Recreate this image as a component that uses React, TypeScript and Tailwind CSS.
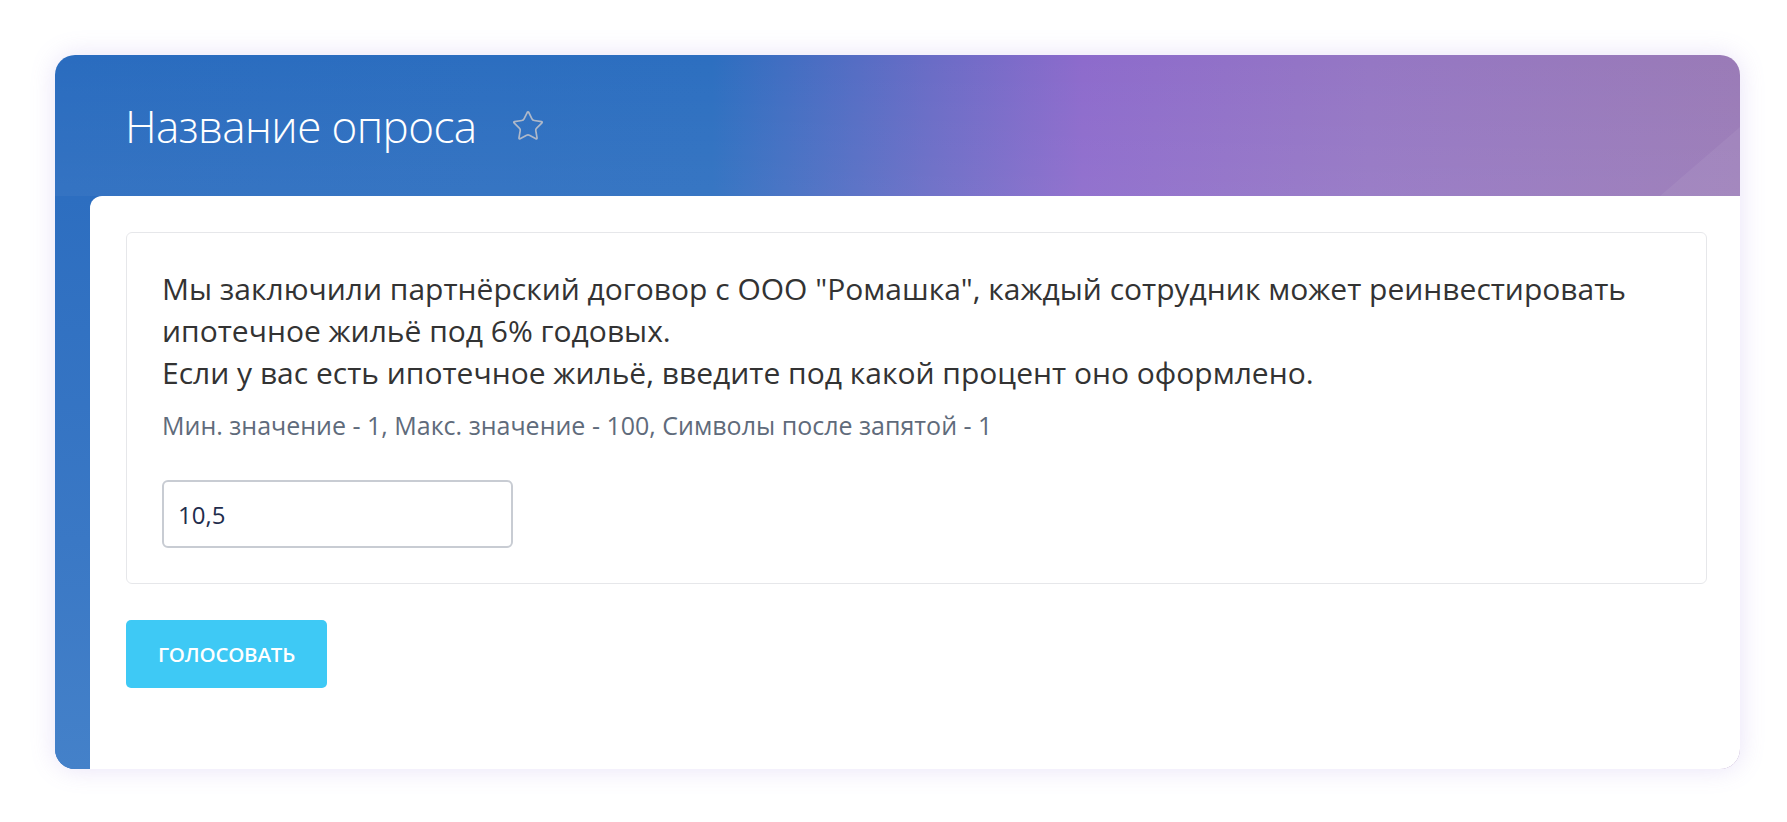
import { Star } from 'lucide-react'

export default function App() {
  return (
    <div className="min-h-screen bg-white pt-[55px] pl-[55px] font-['Open_Sans',sans-serif]">
      <div className="relative w-[1685px] rounded-[20px] overflow-hidden shadow-[0_0_26px_rgba(140,110,220,0.2)] bg-[linear-gradient(90deg,#2a6cbf_0%,#2d6fc0_39%,#6a6cc6_52%,#8d6bcc_61%,#9577c4_78%,#9a7bb7_100%)]">
        {/* Header */}
        <div className="relative h-[141px] pl-[70px] pt-[41px]">
          <div className="absolute inset-0 bg-[linear-gradient(180deg,rgba(255,255,255,0)_0%,rgba(255,255,255,0.05)_100%)]" />
          <div className="absolute inset-0 bg-white/[0.06] [clip-path:polygon(1605px_141px,1685px_72px,1685px_141px)]" />
          <div className="relative flex items-center">
            <h1 className="text-[44px] leading-[60px] font-light text-white tracking-[-0.6px]">
              Название опроса
            </h1>
            <Star className="ml-[35px] w-[34px] h-[34px] text-[#aeb8c9]" strokeWidth={1.2} />
          </div>
        </div>

        {/* Body */}
        <div className="flex">
          <div className="w-[35px] shrink-0 bg-[linear-gradient(180deg,#2d6ec0_0%,#3a78c5_60%,#4481c9_100%)]" />
          <div className="flex-1 bg-white rounded-tl-[12px] pl-[36px] pr-[33px] pt-[36px] pb-[81px]">
            <div className="border border-[#e6e7ea] rounded-[6px] px-[35px] pt-[35px] pb-[35px]">
              <p className="text-[30px] leading-[42px] text-[#333333]">
                Мы заключили партнёрский договор с ООО "Ромашка", каждый сотрудник может реинвестировать ипотечное жильё под 6% годовых.
                <br />
                Если у вас есть ипотечное жильё, введите под какой процент оно оформлено.
              </p>
              <p className="mt-[14px] text-[25px] leading-[34px] text-[#5f6b7b]">
                Мин. значение - 1, Макс. значение - 100, Символы после запятой - 1
              </p>
              <input
                type="text"
                defaultValue="10,5"
                className="mt-[38px] block w-[351px] h-[68px] border-2 border-[#c8ccd3] rounded-[6px] px-[14px] text-[24px] text-[#1f2d4d] outline-none"
              />
            </div>
            <button className="mt-[36px] h-[68px] w-[201px] rounded-[5px] bg-[#3ec9f5] text-white text-[20.5px] font-semibold tracking-[-0.2px]">
              ГОЛОСОВАТЬ
            </button>
          </div>
        </div>
      </div>
    </div>
  )
}
